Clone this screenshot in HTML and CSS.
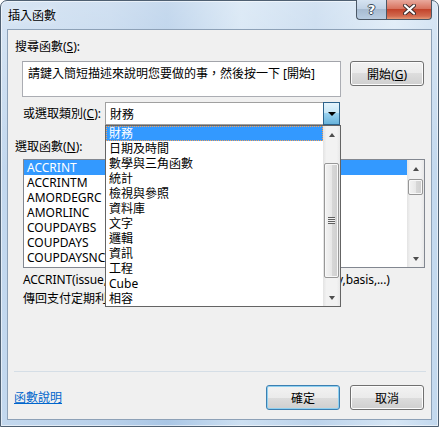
FILE: index.html
```html
<!DOCTYPE html>
<html lang="zh-Hant">
<head>
  <meta charset="UTF-8">
  <title>插入函數</title>
<link rel="stylesheet" href="styles.css">
</head>
<body>
  <div class="window">
    <div class="titlebar">
      <span class="title">插入函數</span>
      <div class="caption-buttons">
        <div class="cap-btn help">?</div>
        <div class="cap-btn close">
          <svg width="13" height="11" viewBox="0 0 13 11">
            <path d="M2 1.5 L11 9.5 M11 1.5 L2 9.5" stroke="#3a2a2a" stroke-width="4" stroke-linecap="round"/>
            <path d="M2 1.5 L11 9.5 M11 1.5 L2 9.5" stroke="#fff" stroke-width="2.2" stroke-linecap="round"/>
          </svg>
        </div>
      </div>
    </div>

    <div class="client">
      <div class="label search-label">搜尋函數(<u>S</u>):</div>

      <div class="search-row">
        <div class="search-box">請鍵入簡短描述來說明您要做的事，然後按一下 [開始]</div>
        <button class="btn go-btn" type="button">開始(<u>G</u>)</button>
      </div>

      <div class="category-row">
        <span class="label category-label">或選取類別(<u>C</u>):</span>
        <div class="combo">
          <span>財務</span>
          <span class="combo-arrow"><span class="tri-down"></span></span>
        </div>
      </div>

      <div class="label pick-label">選取函數(<u>N</u>):</div>

      <div class="listbox">
        <ul class="fn-list">
          <li class="selected">ACCRINT</li>
          <li>ACCRINTM</li>
          <li>AMORDEGRC</li>
          <li>AMORLINC</li>
          <li>COUPDAYBS</li>
          <li>COUPDAYS</li>
          <li>COUPDAYSNC</li>
        </ul>
        <div class="vscroll">
          <div class="sb-btn"><span class="arrow-up"></span></div>
          <div class="sb-track">
            <div class="sb-thumb small"></div>
          </div>
          <div class="sb-btn"><span class="arrow-down"></span></div>
        </div>
      </div>

      <div class="syntax">ACCRINT(issue,first_interest,settlement,rate,par,frequency,basis,...)</div>
      <div class="desc">傳回支付定期利息之證券的應計利息。</div>

      <div class="sep"></div>

      <div class="footer">
        <a class="help-link" href="#">函數說明</a>
        <button class="btn ok-btn" type="button">確定</button>
        <button class="btn" type="button">取消</button>
      </div>

      <!-- open category drop-down -->
      <div class="dropdown">
        <ul class="cat-list">
          <li class="selected">財務</li>
          <li>日期及時間</li>
          <li>數學與三角函數</li>
          <li>統計</li>
          <li>檢視與參照</li>
          <li>資料庫</li>
          <li>文字</li>
          <li>邏輯</li>
          <li>資訊</li>
          <li>工程</li>
          <li>Cube</li>
          <li>相容</li>
        </ul>
        <div class="vscroll">
          <div class="sb-btn"><span class="arrow-up"></span></div>
          <div class="sb-track">
            <div class="sb-thumb big"><span class="grip"></span></div>
          </div>
          <div class="sb-btn"><span class="arrow-down"></span></div>
        </div>
      </div>
    </div>
  </div>
</body>
</html>
```

FILE: styles.css
```css
/* General */
* {
  box-sizing: border-box;
}

body {
  margin: 0;
  font-family: "Noto Sans", "Noto Sans CJK TC", sans-serif;
  font-size: 12px;
  color: #000;
  background: #fff;
}

u {
  text-decoration: underline;
}

/* Window frame */
.window {
  width: 439px;
  height: 427px;
  border: 1px solid #4f6072;
  border-radius: 7px 7px 0 0;
  padding: 0 6px 6px;
  display: flex;
  flex-direction: column;
  background:
    linear-gradient(180deg, rgba(255, 255, 255, 0.35), rgba(255, 255, 255, 0) 40%),
    linear-gradient(90deg, #c3d8ee 0%, #b8d0ea 25%, #a9c6e5 38%, #cde0f2 55%, #bcd3eb 72%, #d6e6f5 90%, #c2d8ee 100%);
  box-shadow: inset 0 0 0 1px rgba(255, 255, 255, 0.55);
}

.titlebar {
  height: 28px;
  flex-shrink: 0;
  display: flex;
  align-items: center;
}

.title {
  margin-left: 1px;
  line-height: 15px;
  text-shadow: 0 0 6px rgba(255, 255, 255, 0.9);
}

.caption-buttons {
  margin-left: auto;
  align-self: flex-start;
  margin-top: -1px;
  display: flex;
  height: 20px;
}

.cap-btn {
  height: 20px;
  display: flex;
  align-items: center;
  justify-content: center;
  border: 1px solid #4b5866;
  border-top: none;
}

.cap-btn.help {
  width: 30px;
  border-radius: 0 0 0 4px;
  border-right: none;
  background: linear-gradient(180deg, #d6e3f1 0%, #c1d2e5 45%, #a7bbd1 50%, #b9cde2 100%);
  color: #fff;
  font-family: "DejaVu Sans", sans-serif;
  font-weight: bold;
  font-size: 13px;
  text-shadow: 1px 0 0 #3a4a5a, -1px 0 0 #3a4a5a, 0 1px 0 #3a4a5a, 0 -1px 0 #3a4a5a;
}

.cap-btn.close {
  width: 46px;
  border-radius: 0 0 4px 0;
  background: linear-gradient(180deg, #e9a99d 0%, #d8735f 45%, #c2442c 50%, #d26a4f 85%, #e59a78 100%);
}

/* Client area */
.client {
  flex: 1;
  position: relative;
  display: flex;
  flex-direction: column;
  background: #f0f0f0;
  border: 1px solid #8da1b7;
}

.label {
  line-height: 15px;
  white-space: nowrap;
}

.search-label {
  margin: 9px 0 0 7px;
}

.search-row {
  display: flex;
  margin: 7px 0 0 14px;
}

.search-box {
  width: 319px;
  height: 36px;
  border: 1px solid #abadb3;
  border-top-color: #a2a4aa;
  background: #fff;
  padding: 4px 0 0 5px;
  line-height: 15px;
  white-space: nowrap;
}

/* Buttons */
.btn {
  width: 74px;
  height: 25px;
  padding: 0;
  font-family: inherit;
  font-size: 12px;
  color: #000;
  border: 1px solid #707070;
  border-radius: 3px;
  background: linear-gradient(180deg, #f2f2f2 0%, #ebebeb 50%, #dddddd 50%, #cfcfcf 100%);
  box-shadow: inset 0 0 0 1px #fcfcfc;
}

.go-btn {
  margin-left: 9px;
}

.ok-btn {
  border-color: #3c7fb1;
  box-shadow: inset 0 0 0 1px #8fd0f0;
}

/* Category combo */
.category-row {
  display: flex;
  align-items: center;
  margin: 5px 0 0 15px;
}

.category-label {
  width: 82px;
}

.combo {
  width: 235px;
  height: 23px;
  border: 1px solid #a0a0a0;
  background: #fff;
  display: flex;
  align-items: center;
  padding-left: 4px;
}

.combo-arrow {
  margin-left: auto;
  width: 17px;
  height: 23px;
  margin-right: -1px;
  border: 1px solid #2c628b;
  background: linear-gradient(180deg, #e5f4fc 0%, #c4e5f6 50%, #98d1ef 50%, #68b3db 100%);
  display: flex;
  align-items: center;
  justify-content: center;
}

.tri-down {
  border-left: 4px solid transparent;
  border-right: 4px solid transparent;
  border-top: 4px solid #000;
}

.pick-label {
  margin: 14px 0 0 7px;
}

/* Function list */
.listbox {
  margin: 5px 0 0 15px;
  width: 402px;
  height: 109px;
  border: 1px solid #828790;
  background: #fff;
  display: flex;
}

.fn-list,
.cat-list {
  flex: 1;
  list-style: none;
  margin: 0;
  padding: 0;
  overflow: hidden;
}

.fn-list li,
.cat-list li {
  height: 15px;
  line-height: 15px;
  padding-left: 3px;
  white-space: nowrap;
}

.fn-list li.selected,
.cat-list li.selected {
  background: #3399ff;
  color: #fff;
}

.cat-list li.selected {
  outline: 1px dotted #f5a25a;
  outline-offset: -1px;
}

/* Scrollbars */
.vscroll {
  width: 17px;
  display: flex;
  flex-direction: column;
  background: linear-gradient(90deg, #e3e3e3 0%, #f2f2f2 20%, #f2f2f2 80%, #e8e8e8 100%);
}

.sb-btn {
  height: 17px;
  flex-shrink: 0;
  display: flex;
  align-items: center;
  justify-content: center;
}

.arrow-up {
  border-left: 3.5px solid transparent;
  border-right: 3.5px solid transparent;
  border-bottom: 4px solid #4d4d4d;
}

.arrow-down {
  border-left: 3.5px solid transparent;
  border-right: 3.5px solid transparent;
  border-top: 4px solid #4d4d4d;
}

.sb-track {
  flex: 1;
}

.sb-thumb {
  margin: 0 1px;
  border: 1px solid #979797;
  border-radius: 2px;
  background: linear-gradient(90deg, #f3f3f3 0%, #e8e8e8 50%, #d8d8d8 51%, #cfcfcf 100%);
  box-shadow: inset 0 0 0 1px #f8f8f8;
  display: flex;
  align-items: center;
  justify-content: center;
}

.sb-thumb.small {
  margin-top: 2px;
  height: 16px;
}

.sb-thumb.big {
  margin-top: 20px;
  height: 115px;
}

.grip {
  width: 7px;
  height: 7px;
  background: repeating-linear-gradient(180deg, #5f5f5f 0, #5f5f5f 1px, #f0f0f0 1px, #f0f0f0 2px);
}

/* Function info */
.syntax {
  margin: 4px 0 0 15px;
  line-height: 15px;
  white-space: nowrap;
  letter-spacing: -0.1px;
}

.desc {
  margin: 4px 0 0 15px;
  line-height: 15px;
}

.sep {
  margin: auto 5px 0 6px;
  height: 1px;
  background: #d5dee6;
}

/* Footer */
.footer {
  display: flex;
  align-items: center;
  margin: 13px 7px 9px 6px;
  gap: 10px;
}

.help-link {
  color: #0066cc;
  line-height: 15px;
  text-decoration: underline;
  margin-right: auto;
}

/* Drop-down menu */
.dropdown {
  position: absolute;
  left: 97px;
  top: 95px;
  width: 236px;
  height: 182px;
  border: 1px solid #646464;
  background: #fff;
  display: flex;
}
```
